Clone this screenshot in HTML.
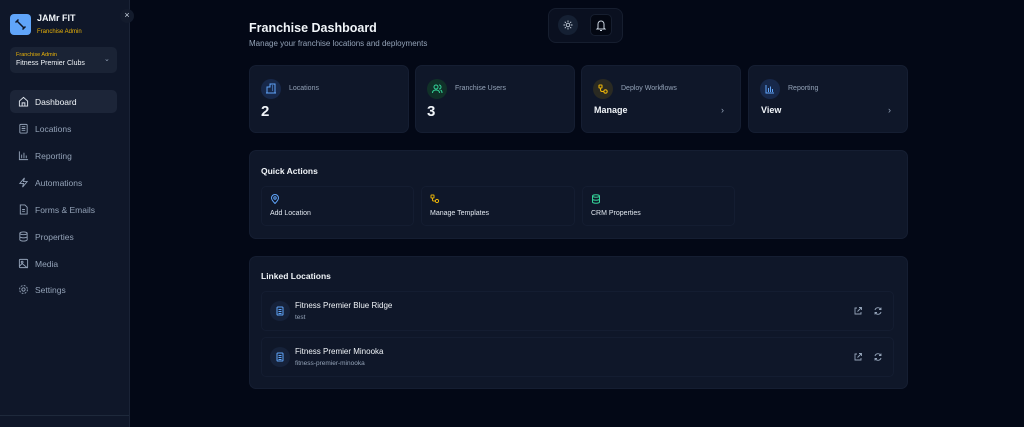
<!DOCTYPE html>
<html><head><style>
*{box-sizing:border-box;margin:0;padding:0}
body{width:1024px;height:427px;background:#030816;font-family:"Liberation Sans",sans-serif;color:#f1f5f9;position:relative;overflow:hidden}
.sb{position:absolute;left:0;top:0;width:130px;height:427px;background:#0f1729;border-right:1px solid #1a2336}
.sb .bl{position:absolute;left:0;right:0;top:415px;border-top:1px solid #1e293b}
.logo{position:absolute;left:10px;top:14px;width:21px;height:21px;background:#60a5fa;border-radius:4px}
.abs{position:absolute}
.nav{position:absolute;left:10px;width:107px;height:23px;font-size:8.5px;color:#94a3b8;display:flex;align-items:center;padding-left:25px}
.nav.act{background:#1c2538;border-radius:5px;color:#f1f5f9}
.nav svg{position:absolute;left:8px;top:6px}
.card{position:absolute;background:#0f1729;border:1px solid #151e32;border-radius:7px}
.ic{position:absolute;width:20px;height:20px;border-radius:50%}
.lbl{font-size:7px;color:#94a3b8;position:absolute}
.qa{position:absolute;top:186px;height:40px;border:1px solid #141d31;border-radius:5px}
.qa span{position:absolute;left:8px;top:23px;font-size:7px;color:#e2e8f0}
.row{position:absolute;left:261px;width:633px;height:40px;border:1px solid #141d31;border-radius:5px}
</style></head><body>
<div class="sb">
<div class="logo"><svg width="21" height="21" viewBox="0 0 21 21"><path d="M7 7l7 7M5.5 8.5l3-3M12.5 15.5l3-3" stroke="#0f1729" stroke-width="1.5" fill="none"/></svg></div>
<div class="abs" style="left:37px;top:13px;font-size:9px;font-weight:bold">JAMr FIT</div>
<div class="abs" style="left:37px;top:29px;font-size:6px;color:#eab308">Franchise Admin</div>
<div class="abs" style="left:120px;top:9px;width:14px;height:14px;border-radius:50%;background:#131b2c;font-size:9px;color:#cbd5e1;text-align:center;line-height:13px">×</div>
<div class="abs" style="left:10px;top:47px;width:107px;height:26px;background:#1a2335;border-radius:5px"></div>
<div class="abs" style="left:16px;top:52px;font-size:5.5px;color:#eab308">Franchise Admin</div>
<div class="abs" style="left:16px;top:60px;font-size:7px;color:#f1f5f9">Fitness Premier Clubs</div>
<div class="abs" style="left:104px;top:55px;font-size:7px;color:#94a3b8">⌄</div>
<div class="nav act" style="top:90px"><svg width="11" height="11" viewBox="0 0 12 12" fill="none" stroke="#e2e8f0" stroke-width="1"><path d="M1.5 5.5L6 1.5l4.5 4V11h-9z M4.5 11V7.5h3V11"/></svg>Dashboard</div>
<div class="nav" style="top:117px"><svg width="11" height="11" viewBox="0 0 12 12" fill="none" stroke="#94a3b8" stroke-width="1"><rect x="2" y="1.5" width="8" height="9.5" rx="1"/><path d="M4 4h4M4 6h4M4 8h4"/></svg>Locations</div>
<div class="nav" style="top:144px"><svg width="11" height="11" viewBox="0 0 12 12" fill="none" stroke="#94a3b8" stroke-width="1"><path d="M1.5 1.5V10.5H11M4 9V5M6.5 9V3M9 9V6"/></svg>Reporting</div>
<div class="nav" style="top:171px"><svg width="11" height="11" viewBox="0 0 12 12" fill="none" stroke="#94a3b8" stroke-width="1"><path d="M7 1L2 7h4l-1 4 5-6H6z"/></svg>Automations</div>
<div class="nav" style="top:198px"><svg width="11" height="11" viewBox="0 0 12 12" fill="none" stroke="#94a3b8" stroke-width="1"><path d="M2.5 1h5l2.5 2.5V11h-7.5z M4.5 6h3M4.5 8h3"/></svg>Forms &amp; Emails</div>
<div class="nav" style="top:225px"><svg width="11" height="11" viewBox="0 0 12 12" fill="none" stroke="#94a3b8" stroke-width="1"><ellipse cx="6" cy="2.5" rx="4" ry="1.5"/><path d="M2 2.5v7c0 .8 1.8 1.5 4 1.5s4-.7 4-1.5v-7M2 6c0 .8 1.8 1.5 4 1.5S10 6.8 10 6"/></svg>Properties</div>
<div class="nav" style="top:252px"><svg width="11" height="11" viewBox="0 0 12 12" fill="none" stroke="#94a3b8" stroke-width="1"><rect x="1.5" y="1.5" width="9" height="9" rx="1"/><circle cx="4.5" cy="4.5" r="1"/><path d="M1.5 9l3-3 6 5"/></svg>Media</div>
<div class="nav" style="top:278px"><svg width="11" height="11" viewBox="0 0 12 12" fill="none" stroke="#94a3b8" stroke-width="1"><circle cx="6" cy="6" r="1.8"/><circle cx="6" cy="6" r="4.3" stroke-dasharray="2 1.4"/></svg>Settings</div>
<div class="bl"></div>
</div>

<div class="abs" style="left:249px;top:21px;font-size:12.5px;font-weight:bold">Franchise Dashboard</div>
<div class="abs" style="left:249px;top:39px;font-size:8px;color:#94a3b8">Manage your franchise locations and deployments</div>
<div class="abs" style="left:548px;top:8px;width:75px;height:35px;border:1px solid #161e2f;background:#0a1020;border-radius:8px"></div>
<div class="abs" style="left:558px;top:15px;width:20px;height:20px;border-radius:50%;background:#152033"><svg width="20" height="20" viewBox="0 0 20 20" fill="none" stroke="#cbd5e1" stroke-width="0.9"><circle cx="10" cy="10" r="1.8"/><path d="M10 5.5v1.5M10 13v1.5M5.5 10h1.5M13 10h1.5M6.8 6.8l1 1M12.2 12.2l1 1M6.8 13.2l1-1M12.2 7.8l1-1"/></svg></div>
<div class="abs" style="left:590px;top:14px;width:22px;height:22px;border-radius:5px;background:#030712;border:1px solid #161e2f"><svg width="20" height="20" viewBox="0 0 20 20" fill="none" stroke="#cbd5e1" stroke-width="1"><path d="M7 13V9a3 3 0 016 0v4l1 1H6z M9 15.5h2"/></svg></div>

<div class="card" style="left:249px;top:65px;width:160px;height:68px">
<div class="ic" style="left:11px;top:13px;background:#17284a"><svg width="20" height="20" viewBox="0 0 20 20" fill="none" stroke="#60a5fa" stroke-width="1"><path d="M6 14V8h3V5h5v9M5 14h10M11 7h1M11 9h1M11 11h1"/></svg></div>
<div class="lbl" style="left:39px;top:19px">Locations</div>
<div class="abs" style="left:11px;top:37px;font-size:15px;font-weight:bold">2</div></div>
<div class="card" style="left:415px;top:65px;width:160px;height:68px">
<div class="ic" style="left:11px;top:13px;background:#103128"><svg width="20" height="20" viewBox="0 0 20 20" fill="none" stroke="#34d399" stroke-width="1"><circle cx="9" cy="8" r="2"/><path d="M5.5 14c0-2 1.5-3 3.5-3s3.5 1 3.5 3M12 6a2 2 0 010 4M13.5 11c1 .4 1.5 1.5 1.5 3"/></svg></div>
<div class="lbl" style="left:39px;top:19px">Franchise Users</div>
<div class="abs" style="left:11px;top:37px;font-size:15px;font-weight:bold">3</div></div>
<div class="card" style="left:581px;top:65px;width:160px;height:68px">
<div class="ic" style="left:11px;top:13px;background:#2a2a22"><svg width="20" height="20" viewBox="0 0 20 20" fill="none" stroke="#eab308" stroke-width="1.1"><rect x="6" y="6" width="3" height="3" rx=".5"/><circle cx="12.5" cy="12.5" r="1.7"/><path d="M7.5 9v2a1.5 1.5 0 001.5 1.5h1.8"/></svg></div>
<div class="lbl" style="left:39px;top:19px">Deploy Workflows</div>
<div class="abs" style="left:12px;top:39px;font-size:9px;font-weight:bold">Manage</div>
<div class="abs" style="left:139px;top:39px;font-size:9px;color:#94a3b8">›</div></div>
<div class="card" style="left:748px;top:65px;width:160px;height:68px">
<div class="ic" style="left:11px;top:13px;background:#17284a"><svg width="20" height="20" viewBox="0 0 20 20" fill="none" stroke="#60a5fa" stroke-width="1"><path d="M6 6v8h8M8.5 13V9M10.5 13V7.5M12.5 13v-3"/></svg></div>
<div class="lbl" style="left:39px;top:19px">Reporting</div>
<div class="abs" style="left:12px;top:39px;font-size:9px;font-weight:bold">View</div>
<div class="abs" style="left:139px;top:39px;font-size:9px;color:#94a3b8">›</div></div>

<div class="card" style="left:249px;top:150px;width:659px;height:89px">
<div class="abs" style="left:11px;top:15px;font-size:8.5px;font-weight:bold">Quick Actions</div></div>
<div class="qa" style="left:261px;width:153px"><svg class="abs" style="left:8px;top:7px" width="10" height="10" viewBox="0 0 10 10" fill="none" stroke="#60a5fa" stroke-width="1"><path d="M5 9.5S1.5 6 1.5 4a3.5 3.5 0 017 0c0 2-3.5 5.5-3.5 5.5z"/><circle cx="5" cy="4" r="1.2"/></svg><span>Add Location</span></div>
<div class="qa" style="left:421px;width:154px"><svg class="abs" style="left:8px;top:7px" width="10" height="10" viewBox="0 0 10 10" fill="none" stroke="#eab308" stroke-width="1"><rect x="1" y="1" width="3" height="3" rx=".5"/><circle cx="7" cy="7" r="1.6"/><path d="M2.5 4v2a1 1 0 001 1h2"/></svg><span>Manage Templates</span></div>
<div class="qa" style="left:582px;width:153px"><svg class="abs" style="left:8px;top:7px" width="10" height="10" viewBox="0 0 10 10" fill="none" stroke="#34d399" stroke-width="1"><ellipse cx="5" cy="2" rx="3.5" ry="1.2"/><path d="M1.5 2v6c0 .7 1.6 1.2 3.5 1.2S8.5 8.7 8.5 8V2M1.5 5c0 .7 1.6 1.2 3.5 1.2S8.5 5.7 8.5 5"/></svg><span>CRM Properties</span></div>

<div class="card" style="left:249px;top:256px;width:659px;height:133px">
<div class="abs" style="left:11px;top:14px;font-size:8.5px;font-weight:bold">Linked Locations</div></div>
<div class="row" style="top:291px">
<div class="ic" style="left:8px;top:9px;background:#16223a"><svg width="20" height="20" viewBox="0 0 20 20" fill="none" stroke="#60a5fa" stroke-width="1"><rect x="7" y="6" width="6" height="8" rx=".8"/><path d="M8.5 8.5h3M8.5 10.5h3M8.5 12.5h3"/></svg></div>
<div class="abs" style="left:33px;top:9px;font-size:8px;color:#f1f5f9">Fitness Premier Blue Ridge</div>
<div class="abs" style="left:33px;top:22px;font-size:6.5px;color:#94a3b8">test</div>
<svg class="abs" style="left:591px;top:14px" width="10" height="10" viewBox="0 0 10 10" fill="none" stroke="#94a3b8" stroke-width="0.9"><path d="M4 2H2v6h6V6M6 1.5h2.5V4M8.5 1.5L4.5 5.5"/></svg>
<svg class="abs" style="left:611px;top:14px" width="10" height="10" viewBox="0 0 10 10" fill="none" stroke="#94a3b8" stroke-width="0.9"><path d="M2 4a3 3 0 015-1.5L8 3.5M8 6a3 3 0 01-5 1.5L2 6.5M8 1.5v2H6M2 8.5v-2h2"/></svg></div>
<div class="row" style="top:337px">
<div class="ic" style="left:8px;top:9px;background:#16223a"><svg width="20" height="20" viewBox="0 0 20 20" fill="none" stroke="#60a5fa" stroke-width="1"><rect x="7" y="6" width="6" height="8" rx=".8"/><path d="M8.5 8.5h3M8.5 10.5h3M8.5 12.5h3"/></svg></div>
<div class="abs" style="left:33px;top:9px;font-size:8px;color:#f1f5f9">Fitness Premier Minooka</div>
<div class="abs" style="left:33px;top:22px;font-size:6.5px;color:#94a3b8">fitness-premier-minooka</div>
<svg class="abs" style="left:591px;top:14px" width="10" height="10" viewBox="0 0 10 10" fill="none" stroke="#94a3b8" stroke-width="0.9"><path d="M4 2H2v6h6V6M6 1.5h2.5V4M8.5 1.5L4.5 5.5"/></svg>
<svg class="abs" style="left:611px;top:14px" width="10" height="10" viewBox="0 0 10 10" fill="none" stroke="#94a3b8" stroke-width="0.9"><path d="M2 4a3 3 0 015-1.5L8 3.5M8 6a3 3 0 01-5 1.5L2 6.5M8 1.5v2H6M2 8.5v-2h2"/></svg></div>
</body></html>
